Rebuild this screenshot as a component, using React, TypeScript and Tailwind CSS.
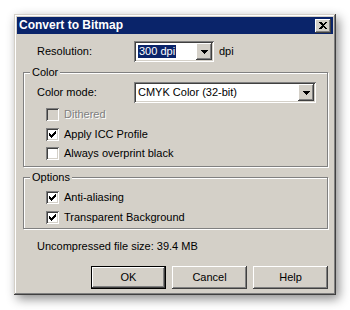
const raised =
  "shadow-[inset_-1px_-1px_0_#404040,inset_1px_1px_0_#ffffff,inset_-2px_-2px_0_#808080,inset_2px_2px_0_#d4d0c8]";
const sunken =
  "shadow-[inset_1px_1px_0_#808080,inset_-1px_-1px_0_#ffffff,inset_2px_2px_0_#404040,inset_-2px_-2px_0_#d4d0c8]";

function Arrow() {
  return (
    <svg width="7" height="4" viewBox="0 0 7 4" shapeRendering="crispEdges">
      <rect x="0" y="0" width="7" height="1" fill="#000" />
      <rect x="1" y="1" width="5" height="1" fill="#000" />
      <rect x="2" y="2" width="3" height="1" fill="#000" />
      <rect x="3" y="3" width="1" height="1" fill="#000" />
    </svg>
  );
}

function Combo({ width, children }: { width: string; children: React.ReactNode }) {
  return (
    <div className={`flex h-[21px] bg-white p-[2px] ${width} ${sunken}`}>
      <div className="flex flex-1 items-center pl-[2px]">{children}</div>
      <div className={`flex h-[17px] w-[16px] items-center justify-center bg-[#d4d0c8] ${raised}`}>
        <Arrow />
      </div>
    </div>
  );
}

function Check() {
  return (
    <svg width="7" height="7" viewBox="0 0 7 7" shapeRendering="crispEdges">
      <rect x="6" y="0" width="1" height="1" fill="#000" />
      <rect x="5" y="1" width="2" height="1" fill="#000" />
      <rect x="0" y="2" width="1" height="1" fill="#000" />
      <rect x="4" y="2" width="3" height="1" fill="#000" />
      <rect x="0" y="3" width="2" height="1" fill="#000" />
      <rect x="3" y="3" width="3" height="1" fill="#000" />
      <rect x="0" y="4" width="5" height="1" fill="#000" />
      <rect x="1" y="5" width="3" height="1" fill="#000" />
      <rect x="2" y="6" width="1" height="1" fill="#000" />
    </svg>
  );
}

function CheckRow({
  label,
  checked,
  disabled,
  className = "",
}: {
  label: string;
  checked?: boolean;
  disabled?: boolean;
  className?: string;
}) {
  return (
    <div className={`flex h-[13px] items-center gap-[5px] ${className}`}>
      <div
        className={`flex h-[13px] w-[13px] items-center justify-center ${sunken} ${
          disabled ? "bg-[#d4d0c8]" : "bg-white"
        }`}
      >
        {checked && <Check />}
      </div>
      <span
        className={
          disabled ? "text-[#808080] [text-shadow:1px_1px_0_#ffffff]" : "text-black"
        }
      >
        {label}
      </span>
    </div>
  );
}

function Button({ label, isDefault }: { label: string; isDefault?: boolean }) {
  return (
    <div className={`h-[23px] w-[75px] ${isDefault ? "border border-black" : ""}`}>
      <div className={`flex h-full w-full items-center justify-center bg-[#d4d0c8] ${raised}`}>
        {label}
      </div>
    </div>
  );
}

export default function App() {
  return (
    <div className="h-[310px] w-[350px] overflow-hidden bg-white pt-[14px] pl-[14px] font-['Liberation_Sans',Arial,sans-serif] text-[11px] leading-[13px] text-black">
      <div className="w-[322px] bg-[#d4d0c8] p-[3px] shadow-[inset_-1px_-1px_0_#404040,inset_1px_1px_0_#d4d0c8,inset_-2px_-2px_0_#808080,inset_2px_2px_0_#ffffff,3px_4px_10px_rgba(0,0,0,0.45)]">
        {/* title bar */}
        <div className="flex h-[17px] items-center justify-between bg-[#0a246a] pl-[2px] pr-[2px]">
          <span className="text-[12px] font-bold text-white">Convert to Bitmap</span>
          <div className={`flex h-[14px] w-[16px] items-center justify-center bg-[#d4d0c8] ${raised}`}>
            <svg width="8" height="7" viewBox="0 0 8 7" shapeRendering="crispEdges">
              <path d="M0 0h2l2 2 2-2h2L5 3.5 8 7H6L4 5 2 7H0l3-3.5z" fill="#000" />
            </svg>
          </div>
        </div>

        <div className="pt-[7px] pl-[6px] pr-[5px] pb-[3px]">
          {/* resolution */}
          <div className="flex h-[21px] items-center">
            <span className="ml-[14px] w-[97px]">Resolution:</span>
            <Combo width="w-[80px]">
              <span className="bg-[#0a246a] px-[1px] text-white">300 dpi</span>
            </Combo>
            <span className="ml-[5px]">dpi</span>
          </div>

          {/* color group */}
          <fieldset className="mt-[4px] border border-[#808080] shadow-[inset_1px_1px_0_#ffffff,1px_1px_0_#ffffff]">
            <legend className="ml-[6px] bg-[#d4d0c8] px-[2px] leading-[13px]">Color</legend>
            <div className="pt-[3px] pb-[6px]">
              <div className="flex h-[21px] items-center">
                <span className="ml-[13px] w-[97px]">Color mode:</span>
                <Combo width="w-[182px]">
                  <span>CMYK Color (32-bit)</span>
                </Combo>
              </div>
              <div className="pl-[22px]">
                <CheckRow label="Dithered" disabled className="mt-[5px]" />
                <CheckRow label="Apply ICC Profile" checked className="mt-[7px]" />
                <CheckRow label="Always overprint black" className="mt-[6px]" />
              </div>
            </div>
          </fieldset>

          {/* options group */}
          <fieldset className="mt-[4px] border border-[#808080] shadow-[inset_1px_1px_0_#ffffff,1px_1px_0_#ffffff]">
            <legend className="ml-[6px] bg-[#d4d0c8] px-[2px] leading-[13px]">Options</legend>
            <div className="pt-[7px] pb-[4px] pl-[22px]">
              <CheckRow label="Anti-aliasing" checked />
              <CheckRow label="Transparent Background" checked className="mt-[7px]" />
            </div>
          </fieldset>

          <div className="mt-[11px] ml-[14px]">Uncompressed file size: 39.4 MB</div>

          <div className="mt-[13px] flex justify-end gap-[6px]">
            <Button label="OK" isDefault />
            <Button label="Cancel" />
            <Button label="Help" />
          </div>
        </div>
      </div>
    </div>
  );
}
